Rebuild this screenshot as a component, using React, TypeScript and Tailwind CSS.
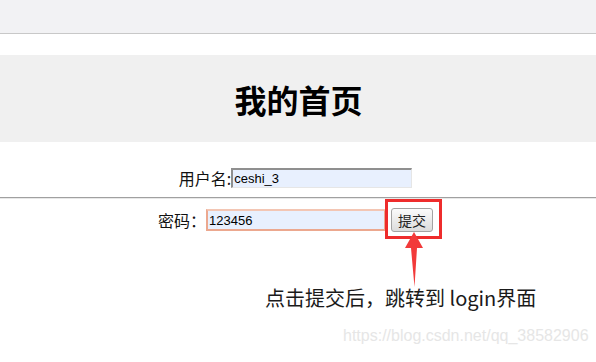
import React from "react";

const cjk = "font-['Noto_Sans_CJK_SC',sans-serif]";
const latin = "font-['Liberation_Sans','Noto_Sans_CJK_SC',sans-serif]";

const App = () => {
  return (
    <div className={`relative w-[596px] h-[362px] overflow-hidden bg-white text-[#111] ${latin}`}>
      {/* browser strip */}
      <div className="h-[34px] bg-[#f2f2f4] border-b border-[#c8c8c8]" />

      {/* header */}
      <div className="mt-[21px] h-[87px] bg-[#f0f0f0] flex items-center justify-center">
        <h1 className={`pl-[1px] text-[32px] leading-none font-bold text-black ${cjk}`}>我的首页</h1>
      </div>

      {/* form */}
      <div className="pt-[26px]">
        <div className="flex items-center justify-center h-[20px] pr-[5px]">
          <span className={`text-[16px] leading-none ${cjk}`}>用户名:</span>
          <input
            readOnly
            value="ceshi_3"
            className="w-[181px] h-[20px] bg-[#e8f0fe] text-[13px] text-black px-[1px] border-t-2 border-l-2 border-b border-r border-t-[#8f8f8f] border-l-[#8f8f8f] border-b-[#e6e6e6] border-r-[#e6e6e6] outline-none"
          />
        </div>

        <div className="mt-[9px] border-t border-[#a0a0a0] border-b border-b-[#e8e8e8]" />

        <div className="mt-[9px] flex items-center justify-center h-[24px] pr-[5px]">
          <span className={`text-[16px] leading-none ${cjk}`}>密码：</span>
          <input
            readOnly
            value="123456"
            className="w-[180px] h-[22px] bg-[#e8f0fe] text-[13px] text-black px-[1px] border-2 border-[#eca88f] border-t-[#f3c6b4] outline-none"
          />
          <button
            className={`ml-[5px] w-[42px] h-[24px] rounded-[3px] border border-[#a3a3a3] bg-gradient-to-b from-[#fbfbfb] to-[#dcdcdc] text-[14px] leading-none text-[#222] ${cjk}`}
          >
            提交
          </button>
        </div>
      </div>

      {/* annotation */}
      <div className="absolute left-[385px] top-[199px] w-[57px] h-[40px] border-[3px] border-[#ee2c2c]" />
      <svg className="absolute left-[400px] top-[230px]" width="30" height="60" viewBox="0 0 30 60">
        <polygon points="14,2 23,18 17,18 14.5,57 11,18 5,18" fill="#f23a3a" />
      </svg>

      <div className={`mt-[53px] pl-[265px] text-[20px] leading-[26px] text-[#1a1a1a] ${cjk}`}>
        点击提交后，跳转到 login界面
      </div>

      <div className="mt-[15px] pl-[343px] text-[16px] leading-[20px] text-[#e6e6e6]">
        https://blog.csdn.net/qq_38582906
      </div>
    </div>
  );
};

export default App;
